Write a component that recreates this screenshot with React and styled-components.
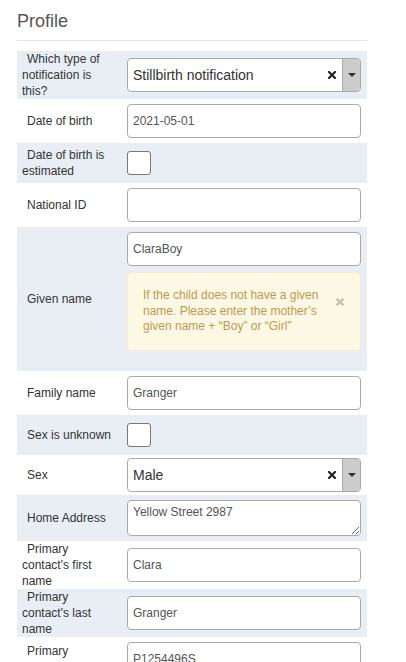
import React from 'react';
import styled, { createGlobalStyle } from 'styled-components';

const GlobalStyle = createGlobalStyle`
  html, body {
    margin: 0;
    padding: 0;
    overflow: hidden;
    background: #fff;
  }
  body {
    font-family: "Liberation Sans", Arial, Helvetica, sans-serif;
  }
`;

const Page = styled.div`
  width: 350px;
  margin-left: 17px;
`;

const Title = styled.h2`
  margin: 0 0 10px;
  padding: 11px 0 9px;
  font-size: 18px;
  line-height: 20px;
  font-weight: normal;
  color: #555;
  border-bottom: 1px solid #e5e5e5;
`;

const Row = styled.div`
  display: flex;
  align-items: center;
  background: ${p => (p.$shaded ? '#e9eef5' : 'transparent')};
`;

const Label = styled.label`
  flex: 0 0 105px;
  box-sizing: border-box;
  padding: 0 7px 0 5px;
  text-indent: 5px;
  font-size: 12px;
  line-height: 16px;
  color: #333;
`;

const Field = styled.div`
  flex: 1;
  min-width: 0;
  padding: ${p => p.$pad}px 6px ${p => p.$pad}px 5px;
`;

const TextInput = styled.input`
  display: block;
  width: 100%;
  height: 34px;
  box-sizing: border-box;
  margin: 0;
  padding: 0 5px;
  border: 1px solid #aaa;
  border-radius: 4px;
  background: #fff;
  font-family: inherit;
  font-size: 12px;
  color: #555;
  outline: none;
`;

const TextArea = styled.textarea`
  display: block;
  width: 100%;
  height: 36px;
  box-sizing: border-box;
  margin: 0;
  padding: 3px 5px;
  border: 1px solid #aaa;
  border-radius: 4px;
  font-family: inherit;
  font-size: 12px;
  line-height: 16px;
  color: #555;
  resize: vertical;
  outline: none;
`;

const Checkbox = styled.input`
  appearance: none;
  display: block;
  width: 24px;
  height: 24px;
  margin: 0;
  border: 1px solid #777;
  border-radius: 3px;
  background: #fff;
`;

const Select = styled.div`
  display: flex;
  align-items: stretch;
  height: 34px;
  box-sizing: border-box;
  border: 1px solid #aaa;
  border-radius: 4px;
  background: #fff;
  overflow: hidden;
`;

const SelectValue = styled.span`
  flex: 1;
  display: flex;
  align-items: center;
  padding-left: 5px;
  font-size: 14px;
  color: #333;
`;

const SelectClear = styled.span`
  display: flex;
  align-items: center;
  padding: 0 6px 0 4px;
`;

const SelectArrow = styled.span`
  width: 17px;
  display: flex;
  align-items: center;
  justify-content: center;
  border-left: 1px solid #aaa;
  background: #ccc;

  &::after {
    content: '';
    border-left: 4px solid transparent;
    border-right: 4px solid transparent;
    border-top: 4px solid #333;
  }
`;

const Alert = styled.div`
  position: relative;
  margin: 6px 0 15px;
  padding: 15px 35px 15px 15px;
  background: #fcf8e3;
  border: 1px solid #faebcc;
  border-radius: 4px;
  color: #c09853;
  font-size: 12px;
  line-height: 15.6px;
`;

const AlertClose = styled.span`
  position: absolute;
  top: 25px;
  right: 15px;
  display: flex;
`;

const HelpText = styled.div`
  font-size: 12px;
  line-height: 16px;
  color: #737373;
`;

const ClearIcon = () => (
  <svg width="8" height="8" viewBox="0 0 8 8">
    <path d="M1 1L7 7M7 1L1 7" stroke="#222" strokeWidth="2.2" strokeLinecap="square" />
  </svg>
);

const CloseIcon = () => (
  <svg width="10" height="8" viewBox="0 0 10 8">
    <path d="M1.5 0.8L8.5 7.2M8.5 0.8L1.5 7.2" stroke="#c6c2b3" strokeWidth="2.4" />
  </svg>
);

const SelectBox = ({ value }) => (
  <Select>
    <SelectValue>{value}</SelectValue>
    <SelectClear><ClearIcon /></SelectClear>
    <SelectArrow />
  </Select>
);

export default function App() {
  return (
    <Page>
      <GlobalStyle />
      <Title>Profile</Title>

      <Row $shaded>
        <Label>Which type of notification is this?</Label>
        <Field $pad={3}><SelectBox value="Stillbirth notification" /></Field>
      </Row>

      <Row>
        <Label>Date of birth</Label>
        <Field $pad={5}><TextInput readOnly value="2021-05-01" /></Field>
      </Row>

      <Row $shaded>
        <Label>Date of birth is estimated</Label>
        <Field $pad={8}><Checkbox type="checkbox" /></Field>
      </Row>

      <Row>
        <Label>National ID</Label>
        <Field $pad={5}><TextInput readOnly value="" /></Field>
      </Row>

      <Row $shaded>
        <Label>Given name</Label>
        <Field $pad={5}>
          <TextInput readOnly value="ClaraBoy" />
          <Alert>
            If the child does not have a given name. Please enter the mother’s given name + “Boy” or “Girl”
            <AlertClose><CloseIcon /></AlertClose>
          </Alert>
        </Field>
      </Row>

      <Row>
        <Label>Family name</Label>
        <Field $pad={5}><TextInput readOnly value="Granger" /></Field>
      </Row>

      <Row $shaded>
        <Label>Sex is unknown</Label>
        <Field $pad={8}><Checkbox type="checkbox" /></Field>
      </Row>

      <Row>
        <Label>Sex</Label>
        <Field $pad={3}><SelectBox value="Male" /></Field>
      </Row>

      <Row $shaded>
        <Label>Home Address</Label>
        <Field $pad={5}><TextArea readOnly value="Yellow Street 2987" /></Field>
      </Row>

      <Row>
        <Label>Primary contact's first name</Label>
        <Field $pad={5}><TextInput readOnly value="Clara" /></Field>
      </Row>

      <Row $shaded>
        <Label>Primary contact's last name</Label>
        <Field $pad={5}><TextInput readOnly value="Granger" /></Field>
      </Row>

      <Row>
        <Label>Primary contact's identification number</Label>
        <Field $pad={5}>
          <TextInput readOnly value="P1254496S" />
          <HelpText>Enter the number exactly as it appears on the identity document</HelpText>
        </Field>
      </Row>
    </Page>
  );
}
